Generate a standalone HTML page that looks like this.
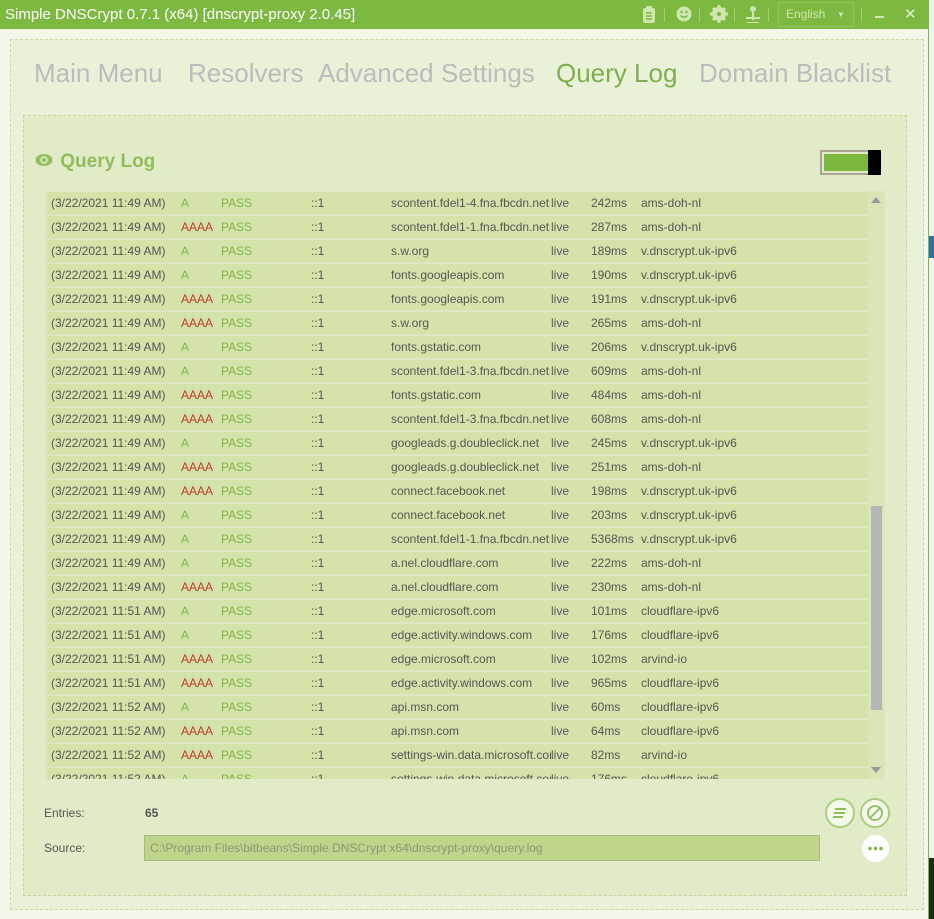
<!DOCTYPE html>
<html><head><meta charset="utf-8"><style>
*{margin:0;padding:0;box-sizing:border-box}
body{width:934px;height:919px;overflow:hidden;background:#f0f0f0;font-family:"Liberation Sans",sans-serif;position:relative}
#desk1{position:absolute;left:929px;top:236px;width:5px;height:22px;background:#2f6fae}
#desk3{position:absolute;left:929px;top:858px;width:5px;height:61px;background:#1e2a1a}
#win{position:absolute;left:0;top:0;width:929px;height:919px;background:#f2f7e9;border-right:1px solid #7cb740}
#title{position:absolute;left:0;top:0;width:929px;height:29px;background:#7db841;color:#fff;font-size:15px;line-height:29px;padding-left:5px}
.ti{position:absolute;top:0;height:29px;color:#cfe6ae}
#outer{position:absolute;left:10px;top:39px;width:914px;height:871px;border:1px dashed #c8dba4;background:#e9f2d8}
.tab{position:absolute;top:58px;font-size:26px;color:#bcbcbc}
#inner{position:absolute;left:23px;top:115px;width:884px;height:781px;border:1px dashed #c4d89c;background:#e1ebc8}
#hdr{position:absolute;left:35px;top:151px;font-size:19px;font-weight:bold;color:#92bd5c}
#tbl{position:absolute;left:45px;top:191px;width:840px;height:588px;background:#dde8c0;overflow:hidden}
.r{position:absolute;left:2px;width:821px;height:22px;background:#d4e3aa;font-size:12px;color:#555;line-height:22px}
.r span{position:absolute;top:0;white-space:nowrap}
.c1{left:4px}.c2{left:134px;color:#7cb740}.c2.a{color:#c0392b}.c3{left:174px;color:#7cb740}.c4{left:264px}.c5{left:344px;width:160px;overflow:hidden}.c6{left:504px}.c7{left:544px}.c8{left:594px}
#sb{position:absolute;left:868px;top:191px;width:16px;height:588px;background:#d8e5b6}
#thumb{position:absolute;left:871px;top:506px;width:11px;height:204px;background:#b6b6b6}
.lbl{position:absolute;font-size:12px;color:#555}
.cb{position:absolute;width:30px;height:30px;border-radius:50%;border:2px solid #a9cf7f;background:#f4f9ec}
</style></head><body>
<div id="desk1"></div><div id="desk3"></div>
<div id="win">
<div id="title">Simple DNSCrypt 0.7.1 (x64) [dnscrypt-proxy 2.0.45]
<svg class="ti" style="left:641px" width="16" height="29"><rect x="2" y="8" width="12" height="15" rx="2" fill="#cfe6ae"/><rect x="5" y="6" width="6" height="4" fill="#cfe6ae"/><path d="M5 13h6M5 16h6M5 19h6" stroke="#7db841" stroke-width="1.4"/></svg>
<svg class="ti" style="left:675px" width="18" height="29"><circle cx="9" cy="14" r="7.5" fill="#cfe6ae"/><circle cx="6.5" cy="12" r="1.2" fill="#7db841"/><circle cx="11.5" cy="12" r="1.2" fill="#7db841"/><path d="M5.5 15.5q3.5 3.5 7 0" stroke="#7db841" stroke-width="1.4" fill="none"/></svg>
<svg class="ti" style="left:710px" width="18" height="29"><circle cx="9" cy="14" r="5" fill="none" stroke="#cfe6ae" stroke-width="4"/><path d="M9 5v18M0 14h18M3 8l12 12M15 8L3 20" stroke="#cfe6ae" stroke-width="3"/><circle cx="9" cy="14" r="2.2" fill="#7db841"/></svg>
<svg class="ti" style="left:744px" width="18" height="29"><circle cx="9" cy="9" r="3" fill="#cfe6ae"/><path d="M8 12h2v8H8zM2 17h14v2H2zM3 22h12v1H3z" fill="#cfe6ae"/></svg>
<div style="position:absolute;left:664px;top:8px;width:1px;height:14px;background:#a3cc77"></div>
<div style="position:absolute;left:699px;top:8px;width:1px;height:14px;background:#a3cc77"></div>
<div style="position:absolute;left:734px;top:8px;width:1px;height:14px;background:#a3cc77"></div>
<div style="position:absolute;left:768px;top:8px;width:1px;height:14px;background:#a3cc77"></div>
<div style="position:absolute;left:778px;top:2px;width:76px;height:25px;border:1px solid #93c462;background:#7db841;color:#cfe6ae;font-size:12px;line-height:23px;padding-left:7px">English<span style="position:absolute;left:58px;font-size:8px">▼</span></div>
<div style="position:absolute;left:861px;top:8px;width:1px;height:14px;background:#a3cc77"></div>
<div style="position:absolute;left:875px;top:16px;width:9px;height:2px;background:#cfe6ae"></div>
<div style="position:absolute;left:904px;top:0;color:#e0f0cc;font-size:15px">✕</div>
</div>
<div id="outer"></div>
<div class="tab" style="left:34px">Main Menu</div>
<div class="tab" style="left:188px">Resolvers</div>
<div class="tab" style="left:318px">Advanced Settings</div>
<div class="tab" style="left:556px;color:#7fae4e">Query Log</div>
<div class="tab" style="left:699px">Domain Blacklist</div>
<div id="inner"></div>
<div id="hdr"><svg width="20" height="14" style="vertical-align:0"><ellipse cx="9" cy="7" rx="8.5" ry="6" fill="#92bd5c"/><circle cx="9" cy="7" r="3.8" fill="#e1ebc8"/><circle cx="9" cy="7" r="2" fill="#92bd5c"/></svg> Query Log</div>
<div style="position:absolute;left:820px;top:150px;width:61px;height:25px;border:2px solid #a9a390;background:#e1ebc8"><div style="position:absolute;left:2px;top:2px;width:44px;height:17px;background:#7cb740"></div><div style="position:absolute;left:46px;top:-2px;width:13px;height:25px;background:#000"></div></div>
<div id="tbl">
<div class="r" style="top:1px"><span class="c1">(3/22/2021 11:49 AM)</span><span class="c2">A</span><span class="c3">PASS</span><span class="c4">::1</span><span class="c5">scontent.fdel1-4.fna.fbcdn.net</span><span class="c6">live</span><span class="c7">242ms</span><span class="c8">ams-doh-nl</span></div>
<div class="r" style="top:25px"><span class="c1">(3/22/2021 11:49 AM)</span><span class="c2 a">AAAA</span><span class="c3">PASS</span><span class="c4">::1</span><span class="c5">scontent.fdel1-1.fna.fbcdn.net</span><span class="c6">live</span><span class="c7">287ms</span><span class="c8">ams-doh-nl</span></div>
<div class="r" style="top:49px"><span class="c1">(3/22/2021 11:49 AM)</span><span class="c2">A</span><span class="c3">PASS</span><span class="c4">::1</span><span class="c5">s.w.org</span><span class="c6">live</span><span class="c7">189ms</span><span class="c8">v.dnscrypt.uk-ipv6</span></div>
<div class="r" style="top:73px"><span class="c1">(3/22/2021 11:49 AM)</span><span class="c2">A</span><span class="c3">PASS</span><span class="c4">::1</span><span class="c5">fonts.googleapis.com</span><span class="c6">live</span><span class="c7">190ms</span><span class="c8">v.dnscrypt.uk-ipv6</span></div>
<div class="r" style="top:97px"><span class="c1">(3/22/2021 11:49 AM)</span><span class="c2 a">AAAA</span><span class="c3">PASS</span><span class="c4">::1</span><span class="c5">fonts.googleapis.com</span><span class="c6">live</span><span class="c7">191ms</span><span class="c8">v.dnscrypt.uk-ipv6</span></div>
<div class="r" style="top:121px"><span class="c1">(3/22/2021 11:49 AM)</span><span class="c2 a">AAAA</span><span class="c3">PASS</span><span class="c4">::1</span><span class="c5">s.w.org</span><span class="c6">live</span><span class="c7">265ms</span><span class="c8">ams-doh-nl</span></div>
<div class="r" style="top:145px"><span class="c1">(3/22/2021 11:49 AM)</span><span class="c2">A</span><span class="c3">PASS</span><span class="c4">::1</span><span class="c5">fonts.gstatic.com</span><span class="c6">live</span><span class="c7">206ms</span><span class="c8">v.dnscrypt.uk-ipv6</span></div>
<div class="r" style="top:169px"><span class="c1">(3/22/2021 11:49 AM)</span><span class="c2">A</span><span class="c3">PASS</span><span class="c4">::1</span><span class="c5">scontent.fdel1-3.fna.fbcdn.net</span><span class="c6">live</span><span class="c7">609ms</span><span class="c8">ams-doh-nl</span></div>
<div class="r" style="top:193px"><span class="c1">(3/22/2021 11:49 AM)</span><span class="c2 a">AAAA</span><span class="c3">PASS</span><span class="c4">::1</span><span class="c5">fonts.gstatic.com</span><span class="c6">live</span><span class="c7">484ms</span><span class="c8">ams-doh-nl</span></div>
<div class="r" style="top:217px"><span class="c1">(3/22/2021 11:49 AM)</span><span class="c2 a">AAAA</span><span class="c3">PASS</span><span class="c4">::1</span><span class="c5">scontent.fdel1-3.fna.fbcdn.net</span><span class="c6">live</span><span class="c7">608ms</span><span class="c8">ams-doh-nl</span></div>
<div class="r" style="top:241px"><span class="c1">(3/22/2021 11:49 AM)</span><span class="c2">A</span><span class="c3">PASS</span><span class="c4">::1</span><span class="c5">googleads.g.doubleclick.net</span><span class="c6">live</span><span class="c7">245ms</span><span class="c8">v.dnscrypt.uk-ipv6</span></div>
<div class="r" style="top:265px"><span class="c1">(3/22/2021 11:49 AM)</span><span class="c2 a">AAAA</span><span class="c3">PASS</span><span class="c4">::1</span><span class="c5">googleads.g.doubleclick.net</span><span class="c6">live</span><span class="c7">251ms</span><span class="c8">ams-doh-nl</span></div>
<div class="r" style="top:289px"><span class="c1">(3/22/2021 11:49 AM)</span><span class="c2 a">AAAA</span><span class="c3">PASS</span><span class="c4">::1</span><span class="c5">connect.facebook.net</span><span class="c6">live</span><span class="c7">198ms</span><span class="c8">v.dnscrypt.uk-ipv6</span></div>
<div class="r" style="top:313px"><span class="c1">(3/22/2021 11:49 AM)</span><span class="c2">A</span><span class="c3">PASS</span><span class="c4">::1</span><span class="c5">connect.facebook.net</span><span class="c6">live</span><span class="c7">203ms</span><span class="c8">v.dnscrypt.uk-ipv6</span></div>
<div class="r" style="top:337px"><span class="c1">(3/22/2021 11:49 AM)</span><span class="c2">A</span><span class="c3">PASS</span><span class="c4">::1</span><span class="c5">scontent.fdel1-1.fna.fbcdn.net</span><span class="c6">live</span><span class="c7">5368ms</span><span class="c8">v.dnscrypt.uk-ipv6</span></div>
<div class="r" style="top:361px"><span class="c1">(3/22/2021 11:49 AM)</span><span class="c2">A</span><span class="c3">PASS</span><span class="c4">::1</span><span class="c5">a.nel.cloudflare.com</span><span class="c6">live</span><span class="c7">222ms</span><span class="c8">ams-doh-nl</span></div>
<div class="r" style="top:385px"><span class="c1">(3/22/2021 11:49 AM)</span><span class="c2 a">AAAA</span><span class="c3">PASS</span><span class="c4">::1</span><span class="c5">a.nel.cloudflare.com</span><span class="c6">live</span><span class="c7">230ms</span><span class="c8">ams-doh-nl</span></div>
<div class="r" style="top:409px"><span class="c1">(3/22/2021 11:51 AM)</span><span class="c2">A</span><span class="c3">PASS</span><span class="c4">::1</span><span class="c5">edge.microsoft.com</span><span class="c6">live</span><span class="c7">101ms</span><span class="c8">cloudflare-ipv6</span></div>
<div class="r" style="top:433px"><span class="c1">(3/22/2021 11:51 AM)</span><span class="c2">A</span><span class="c3">PASS</span><span class="c4">::1</span><span class="c5">edge.activity.windows.com</span><span class="c6">live</span><span class="c7">176ms</span><span class="c8">cloudflare-ipv6</span></div>
<div class="r" style="top:457px"><span class="c1">(3/22/2021 11:51 AM)</span><span class="c2 a">AAAA</span><span class="c3">PASS</span><span class="c4">::1</span><span class="c5">edge.microsoft.com</span><span class="c6">live</span><span class="c7">102ms</span><span class="c8">arvind-io</span></div>
<div class="r" style="top:481px"><span class="c1">(3/22/2021 11:51 AM)</span><span class="c2 a">AAAA</span><span class="c3">PASS</span><span class="c4">::1</span><span class="c5">edge.activity.windows.com</span><span class="c6">live</span><span class="c7">965ms</span><span class="c8">cloudflare-ipv6</span></div>
<div class="r" style="top:505px"><span class="c1">(3/22/2021 11:52 AM)</span><span class="c2">A</span><span class="c3">PASS</span><span class="c4">::1</span><span class="c5">api.msn.com</span><span class="c6">live</span><span class="c7">60ms</span><span class="c8">cloudflare-ipv6</span></div>
<div class="r" style="top:529px"><span class="c1">(3/22/2021 11:52 AM)</span><span class="c2 a">AAAA</span><span class="c3">PASS</span><span class="c4">::1</span><span class="c5">api.msn.com</span><span class="c6">live</span><span class="c7">64ms</span><span class="c8">cloudflare-ipv6</span></div>
<div class="r" style="top:553px"><span class="c1">(3/22/2021 11:52 AM)</span><span class="c2 a">AAAA</span><span class="c3">PASS</span><span class="c4">::1</span><span class="c5">settings-win.data.microsoft.com</span><span class="c6">live</span><span class="c7">82ms</span><span class="c8">arvind-io</span></div>
<div class="r" style="top:577px"><span class="c1">(3/22/2021 11:52 AM)</span><span class="c2">A</span><span class="c3">PASS</span><span class="c4">::1</span><span class="c5">settings-win.data.microsoft.com</span><span class="c6">live</span><span class="c7">176ms</span><span class="c8">cloudflare-ipv6</span></div>
</div>
<div id="sb"></div><div id="thumb"></div>
<svg style="position:absolute;left:870px;top:196px" width="12" height="8"><path d="M1 7L6 1L11 7Z" fill="#999"/></svg>
<svg style="position:absolute;left:870px;top:766px" width="12" height="8"><path d="M1 1L6 7L11 1Z" fill="#999"/></svg>
<div class="lbl" style="left:44px;top:806px">Entries:</div>
<div class="lbl" style="left:145px;top:806px;font-weight:bold">65</div>
<div class="lbl" style="left:44px;top:841px">Source:</div>
<div style="position:absolute;left:144px;top:835px;width:676px;height:26px;background:#bed58a;border:1px solid #a8ba88;color:#8a9a78;font-size:12px;line-height:24px;padding-left:5px">C:\Program Files\bitbeans\Simple DNSCrypt x64\dnscrypt-proxy\query.log</div>
<div class="cb" style="left:825px;top:798px"><svg width="26" height="26"><path d="M8 9h11M7 13h11M6 17h10" stroke="#8cbf5a" stroke-width="2"/></svg></div>
<div class="cb" style="left:860px;top:798px"><svg width="26" height="26"><circle cx="13" cy="13" r="7" fill="none" stroke="#8cbf5a" stroke-width="1.8"/><path d="M8 18L18 8" stroke="#8cbf5a" stroke-width="1.8"/></svg></div>
<div style="position:absolute;left:862px;top:835px;width:27px;height:27px;border-radius:50%;background:#fff"><svg width="27" height="27"><circle cx="8" cy="13.5" r="1.8" fill="#7cb740"/><circle cx="13.5" cy="13.5" r="1.8" fill="#7cb740"/><circle cx="19" cy="13.5" r="1.8" fill="#7cb740"/></svg></div>
</div>
</body></html>
